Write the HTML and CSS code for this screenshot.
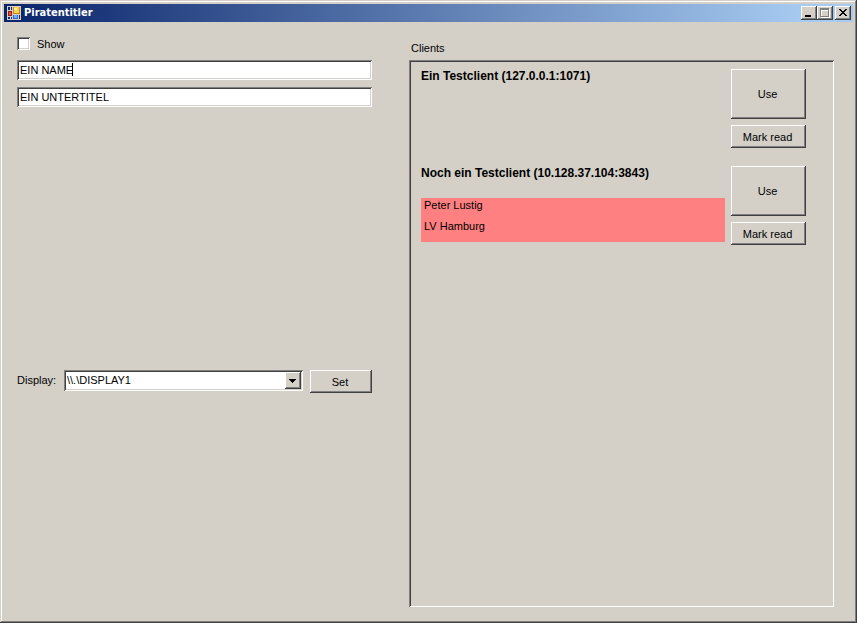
FILE: index.html
```html
<!DOCTYPE html>
<html lang="de">
<head>
<meta charset="utf-8">
<title>Piratentitler</title>
<link rel="stylesheet" href="styles.css">
</head>
<body>
<div class="window">
  <header class="titlebar">
    <svg class="app-icon" width="16" height="16" viewBox="0 0 16 16" shape-rendering="crispEdges" aria-hidden="true">
      <path fill="#d4d0c8" d="M1 1h14v14H1z"/>
      <path fill="#10286c" d="M2 2h2v3H2zM5 2h1v3H5zM2 12h2v2H2zM5 12h1v2H5zM13 10h1v4h-1z"/>
      <path fill="#a01c10" d="M2 6h4v5H2z"/>
      <path fill="#e85838" d="M3 7h2v3H3z"/>
      <path fill="#c88818" d="M7 2h7v7H7z"/>
      <path fill="#fcd050" d="M8 2h5v6H8z"/>
      <path fill="#fff0a0" d="M8 3h3v2H8z"/>
      <path fill="#3468c8" d="M7 10h5v4H7z"/>
      <path fill="#78acf4" d="M8 10h3v3H8z"/>
    </svg>
    <h1 class="title">Piratentitler</h1>
    <button class="caption-button" type="button" aria-label="Minimize">
      <svg width="12" height="10" viewBox="0 0 12 10" shape-rendering="crispEdges"><path d="M2 7h6v2H2z"/></svg>
    </button>
    <button class="caption-button" type="button" aria-label="Maximize" disabled>
      <svg width="12" height="10" viewBox="0 0 12 10" shape-rendering="crispEdges"><path fill="#fff" d="M2 1h9v9H2zM3 3v6h7V3z" fill-rule="evenodd"/><path fill="#808080" d="M1 0h9v9H1zM2 2v6h7V2z" fill-rule="evenodd"/></svg>
    </button>
    <button class="caption-button close" type="button" aria-label="Close">
      <svg width="12" height="10" viewBox="0 0 12 10" shape-rendering="crispEdges"><path d="M2 1h2v1h1v1h2V2h1V1h2v1H9v1H8v1H7v1h1v1h1v1h1v1H8V7H7V6H5v1H4v1H2V7h1V6h1V5h1V4H4V3H3V2H2z"/></svg>
    </button>
  </header>
  <main class="content">
    <form class="editor">
      <label class="show"><input class="checkbox" type="checkbox">Show</label>
      <div class="field"><input class="textbox" type="text" aria-label="Name" value="EIN NAME"><span class="caret"></span></div>
      <div class="field"><input class="textbox" type="text" aria-label="Untertitel" value="EIN UNTERTITEL"></div>
      <div class="display-row">
        <label for="display">Display:</label>
        <div class="combo">
          <select id="display"><option>\\.\DISPLAY1</option></select>
          <span class="arrow"><svg width="7" height="4" viewBox="0 0 7 4" shape-rendering="crispEdges"><path d="M0 0h7v1H6v1H5v1H4v1H3V3H2V2H1V1H0z"/></svg></span>
        </div>
        <button class="button set" type="button">Set</button>
      </div>
    </form>
    <section class="clients">
      <h2 class="clients-label">Clients</h2>
      <div class="panel">
        <article class="client">
          <div class="info">
            <h3 class="name">Ein Testclient (127.0.0.1:1071)</h3>
          </div>
          <div class="actions">
            <button class="button use" type="button">Use</button>
            <button class="button" type="button">Mark read</button>
          </div>
        </article>
        <article class="client">
          <div class="info">
            <h3 class="name">Noch ein Testclient (10.128.37.104:3843)</h3>
            <div class="message"><p>Peter Lustig</p><p>LV Hamburg</p></div>
          </div>
          <div class="actions">
            <button class="button use" type="button">Use</button>
            <button class="button" type="button">Mark read</button>
          </div>
        </article>
      </div>
    </section>
  </main>
</div>
</body>
</html>
```
FILE: styles.css
```css
:root {
  --face: #d4d0c8;
  --shadow: #808080;
  --dark: #404040;
}

* { box-sizing: border-box; }

body, h1, h2, h3, p { margin: 0; }

body, button, input, select {
  font: 11px/13px "Liberation Sans", Arial, sans-serif;
  color: #000;
}

.window {
  display: flex;
  flex-direction: column;
  min-height: 100vh;
  padding: 4px;
  background: var(--face);
  box-shadow: inset -1px -1px var(--dark), inset 1px 1px var(--face),
    inset -2px -2px var(--shadow), inset 2px 2px #fff;
}

.titlebar {
  display: flex;
  align-items: center;
  height: 18px;
  padding: 0 2px;
  background: linear-gradient(to right, #0a246a, #a6caf0 94%);
}

.title {
  flex: 1;
  margin-left: 2px;
  color: #fff;
  font: bold 11px/18px "DejaVu Sans Condensed", "DejaVu Sans", sans-serif;
}

.button, .caption-button, .arrow {
  border: 0;
  background: var(--face);
  box-shadow: inset -1px -1px var(--dark), inset 1px 1px #fff,
    inset -2px -2px var(--shadow);
}

.caption-button {
  width: 16px;
  height: 14px;
  padding: 2px;
}

.caption-button svg, .arrow svg { display: block; }

.close { margin-left: 2px; }

.content {
  flex: 1;
  display: grid;
  grid-template-columns: 355fr 425fr;
  gap: 37px;
  padding: 15px 19px 12px 13px;
}

.show {
  display: flex;
  align-items: center;
  gap: 7px;
  height: 15px;
  margin-bottom: 8px;
}

.checkbox, .textbox, .combo, .panel {
  border: 0;
  box-shadow: inset 1px 1px var(--shadow), inset -1px -1px #fff,
    inset 2px 2px var(--dark), inset -2px -2px var(--face);
}

.checkbox {
  appearance: none;
  width: 13px;
  height: 13px;
  margin: 0 0 2px;
  background: #fff;
}

.field {
  position: relative;
  height: 20px;
  margin-bottom: 7px;
}

.textbox {
  display: block;
  width: 100%;
  height: 20px;
  padding: 2px 3px;
  background: #fff;
}

.caret {
  position: absolute;
  left: 55px;
  top: 3px;
  width: 1px;
  height: 13px;
  background: #000;
}

.display-row {
  display: flex;
  align-items: flex-start;
  margin-top: 263px;
}

.display-row label {
  width: 47px;
  line-height: 21px;
}

.combo {
  flex: 1;
  display: flex;
  height: 21px;
  padding: 2px;
  background: #fff;
}

.combo select {
  flex: 1;
  appearance: none;
  border: 0;
  padding: 0 1px;
  background: transparent;
  outline: 0;
}

.arrow {
  display: grid;
  place-items: center;
  width: 16px;
  padding-right: 1px;
}

.button {
  width: 75px;
  height: 23px;
  padding: 1px 2px 0 0;
}

.set {
  width: 62px;
  margin-left: 7px;
}

.clients {
  display: flex;
  flex-direction: column;
}

.clients-label {
  height: 23px;
  padding: 5px 2px 0;
  font-size: 11px;
  font-weight: normal;
}

.panel {
  flex: 1;
  padding: 9px 28px 9px 12px;
}

.client {
  display: flex;
  gap: 6px;
  margin-bottom: 18px;
}

.info { flex: 1; }

.name {
  height: 32px;
  font-size: 12px;
  line-height: 14px;
}

.message {
  height: 44px;
  padding: 1px 3px;
  background: #ff8080;
}

.message p { margin-bottom: 8px; }

.actions {
  display: flex;
  flex-direction: column;
  gap: 6px;
}

.use { height: 50px; }
```
